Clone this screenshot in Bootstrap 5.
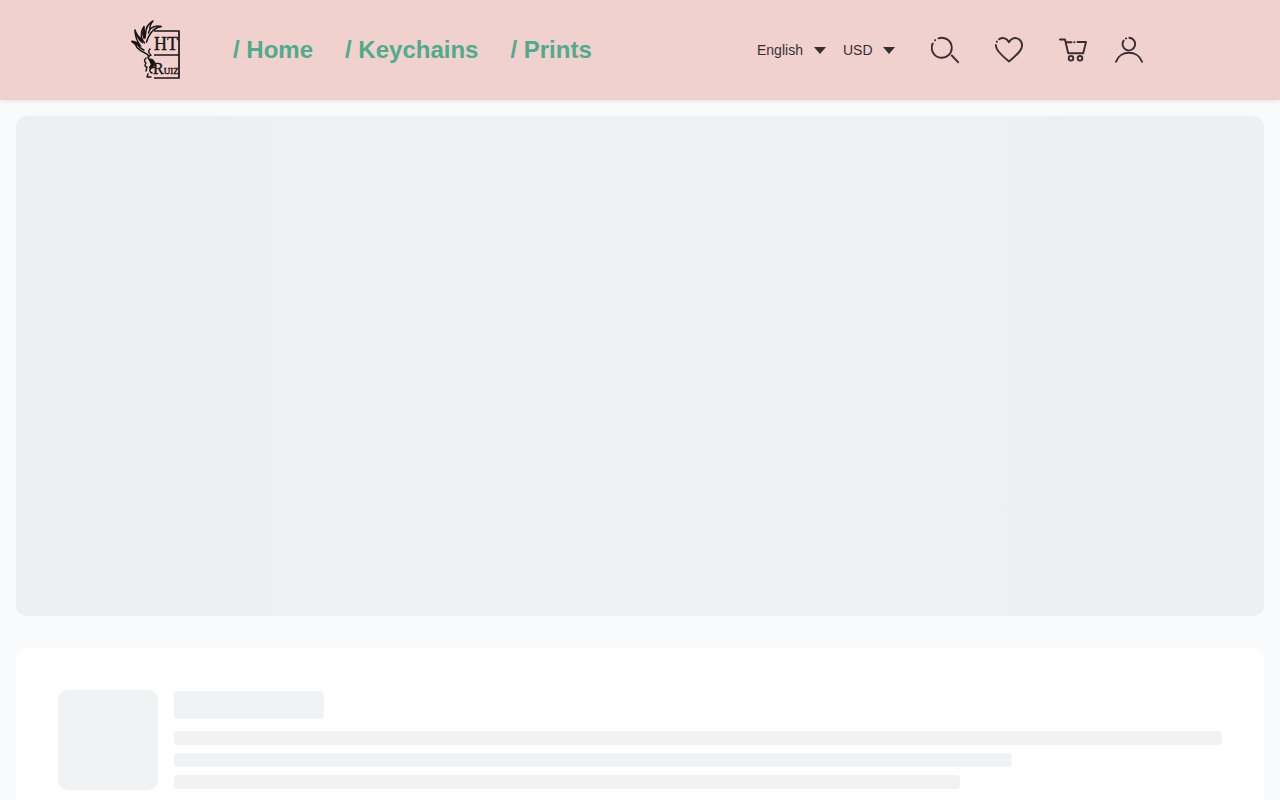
<!DOCTYPE html>
<html lang="en">
<head>
<meta charset="utf-8">
<meta name="viewport" content="width=device-width, initial-scale=1">
<title>HT Ruiz</title>
<link href="https://cdn.jsdelivr.net/npm/bootstrap@5.3.0/dist/css/bootstrap.min.css" rel="stylesheet">
<style>
  body { background: #f9fafc; font-family: "Liberation Sans", Arial, sans-serif; color: #362f30; }
  .site-header { background: #f0d1ce; box-shadow: 0 1px 4px rgba(0, 0, 0, .1); min-height: 100px; }
  .header-inner { width: 80%; }
  .site-logo { width: 56px; height: 68px; }
  .main-links { gap: 32px; margin-left: 49px; }
  .main-links .nav-link { font-size: 24px; line-height: 32px; font-weight: 700; color: #51aa8c; }
  .header-tools { padding-right: 9px; }
  .pickers { gap: 17px; }
  .picker { position: relative; }
  .picker select { appearance: none; border: 0; background: transparent; padding: 0 20px 0 0; font-size: 14px; line-height: 20px; color: #362f30; }
  .picker-language select { width: 69px; }
  .picker-currency select { width: 52px; }
  .picker::after { content: ""; position: absolute; right: 0; top: 50%; margin-top: -3px; border: 6px solid transparent; border-top: 7px solid #362f30; border-bottom: 0; pointer-events: none; }
  .tool-btn { width: 28px; height: 28px; color: #362f30; margin-left: 36px; }
  .tool-btn:last-child { margin-left: 28px; }
  .tool-btn svg { fill: none; stroke: currentColor; stroke-width: 1.9; stroke-linecap: round; stroke-linejoin: round; }
  .hero-skeleton { height: 500px; border-radius: 10px; background: linear-gradient(90deg, #eeeff3 0%, #eeeff3 16%, #eff0f2 24%, #eff0f2 76%, #eeeff3 84%, #eeeff3 100%); }
  .panel { background: #fff; border-radius: 10px; padding: 42px; margin-top: 32px; }
  .bone { background: #f1f2f4; border-radius: 4px; height: 14px; }
  .bone-thumb { width: 100px; height: 100px; border-radius: 10px; }
  .bone-title { width: 150px; height: 28px; margin-bottom: 4px; }
</style>
</head>
<body>
<header class="site-header d-flex align-items-center">
  <div class="header-inner mx-auto d-flex align-items-center justify-content-between">
    <div class="d-flex align-items-center">
      <a href="#" aria-label="HT Ruiz" class="d-block lh-1">
        <svg class="site-logo d-block" viewBox="0 0 56 68" fill="none" stroke="#1b1415" stroke-linejoin="round" stroke-linecap="round">
          <path stroke-width="1.7" stroke-linecap="butt" d="M26 15H51V62H26M26 39H51"/>
          <g stroke-width="1.5">
            <path d="M4 25.500Q9 26 12 29.500Q7 22 7 14Q8.500 20 14 23.500Q12 16 16 10.500Q15.500 15 17.500 18Q18 8.500 25 5Q21.500 9 22 13Q27 9 33 10.500"/>
            <path d="M33 10.500Q26 12 22.500 17.500Q20 21 18.500 26"/>
            <path d="M4 25.500Q8 28 9 31.500Q12 35 17 37Q20 38 21 41M9 27Q11 32 16 34"/>
            <path d="M14 23.500L16.500 27M17.500 18L17 22M22 13L20.500 17"/>
          </g>
          <path fill="#1b1415" stroke="none" d="M3.500 24.500Q10 25 14 31Q8 30 3.500 24.500ZM6.500 13Q9 20 14.500 24L15 28Q7 22 6.500 13ZM16.500 10Q15.500 15 18 19L16 24Q12 16 16.500 10Z"/>
          <path stroke-width="1.4" d="M22 33Q19 36 23 39Q18 41 21 43M18 42Q15 45 18 47L17 49Q17 51 19 51L18 55M23 44Q21 48 27 49M27 51L23 52Q20 55 24 57M20 58L19 61H23"/>
          <path fill="#1b1415" stroke="none" d="M20 43Q25 41 27 46L26 50L22 54L21 51L23 48Z"/>
          <g fill="#1b1415" stroke-width=".4" font-family="Liberation Serif, serif">
            <text x="26" y="34" font-size="18">HT</text>
            <text x="25" y="58" font-size="16">R<tspan font-size="9">UIZ</tspan></text>
          </g>
        </svg>
      </a>
      <nav aria-label="Main">
        <ul class="nav main-links">
          <li class="nav-item"><a class="nav-link p-0" href="#">/ Home</a></li>
          <li class="nav-item"><a class="nav-link p-0" href="#">/ Keychains</a></li>
          <li class="nav-item"><a class="nav-link p-0" href="#">/ Prints</a></li>
        </ul>
      </nav>
    </div>
    <div class="header-tools d-flex align-items-center">
      <div class="pickers d-flex">
        <div class="picker picker-language d-flex"><label class="visually-hidden" for="language">Language</label><select id="language"><option>English</option></select></div>
        <div class="picker picker-currency d-flex"><label class="visually-hidden" for="currency">Currency</label><select id="currency"><option>USD</option></select></div>
      </div>
      <button type="button" class="tool-btn btn border-0 p-0 d-flex" aria-label="Search">
        <svg width="28" height="28" viewBox="0 0 28 28"><path d="M7.500 2.300A10 10 0 1 1 1.700 7.500"/><path d="M4 4.300l.2-.2M20.800 19.500l6.500 6.800"/></svg>
      </button>
      <button type="button" class="tool-btn btn border-0 p-0 d-flex" aria-label="Wishlist">
        <svg width="28" height="28" viewBox="0 0 28 28"><path d="M4 3.200C8 .8 12 2.500 14 6.200C16 2.500 20 .8 24 3.200C28 6 28 11.500 24.500 15.500Q20 20.800 14 25.500Q8 20.800 3.500 15.500Q1 12.500.8 9"/><path d="M1.800 5.800l.1-.2"/></svg>
      </button>
      <button type="button" class="tool-btn btn border-0 p-0 d-flex" aria-label="Cart">
        <svg width="28" height="28" viewBox="0 0 28 28"><path d="M.8 3.500H6L9.200 17.200H24.200L27 6H18.500M7 6.200H12.500M15.200 6.200h.2"/><circle cx="12" cy="22.300" r="2.300"/><circle cx="21" cy="22.300" r="2.300"/></svg>
      </button>
      <button type="button" class="tool-btn btn border-0 p-0 d-flex" aria-label="Account">
        <svg width="28" height="28" viewBox="0 0 28 28"><path d="M14.300 1.800A6.300 6.300 0 1 1 8.600 4.600M11 2.500l.2-.1M1 25.800C5 13.800 23 13.800 27 25.800"/></svg>
      </button>
    </div>
  </div>
</header>
<main class="p-3">
  <div class="hero-skeleton" aria-hidden="true"></div>
  <section class="panel d-flex align-items-center gap-3" aria-busy="true">
    <div class="bone bone-thumb flex-shrink-0"></div>
    <div class="flex-grow-1 d-flex flex-column gap-2">
      <div class="bone bone-title"></div>
      <div class="bone w-100"></div>
      <div class="bone" style="width:80%"></div>
      <div class="bone w-75"></div>
    </div>
  </section>
</main>
<script src="https://cdn.jsdelivr.net/npm/bootstrap@5.3.0/dist/js/bootstrap.bundle.min.js"></script>
</body>
</html>
